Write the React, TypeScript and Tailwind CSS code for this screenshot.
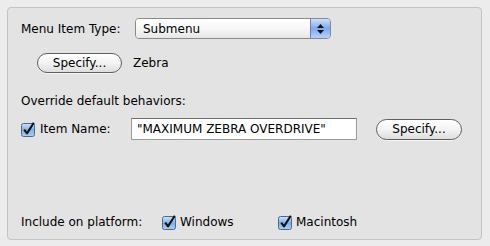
import React from "react";

const font = { fontFamily: '"DejaVu Sans", "Liberation Sans", sans-serif' };

function Check() {
  return (
    <svg width="15" height="15" viewBox="0 0 15 15" className="shrink-0">
      <defs>
        <linearGradient id="cb" x1="0" y1="0" x2="0" y2="1">
          <stop offset="0" stopColor="#cfe3f7" />
          <stop offset="0.5" stopColor="#7fb1e6" />
          <stop offset="1" stopColor="#a9d0f5" />
        </linearGradient>
      </defs>
      <rect x="0.5" y="1.5" width="13" height="13" rx="2" fill="url(#cb)" stroke="#4d6a8c" />
      <path d="M3.2 7.6 L6 11.4 L12.8 0.8" fill="none" stroke="#111" strokeWidth="2.1" strokeLinejoin="round" />
    </svg>
  );
}

function PillButton({ label, w, h }: { label: string; w: string; h: string }) {
  return (
    <div
      className={`${w} ${h} shrink-0 flex items-center justify-center rounded-full border border-[#5f5f5f] bg-gradient-to-b from-[#ffffff] via-[#f3f3f3] to-[#dedede] text-[12px] text-black shadow-[0_1px_0_rgba(255,255,255,0.6)]`}
    >
      {label}
    </div>
  );
}

export default function App() {
  return (
    <div className="w-[490px] h-[246px] bg-[#ececec] pt-[7px] pl-[7px] text-[12px] text-black" style={font}>
      <div className="w-[475px] h-[233px] rounded-[4px] border border-[#c3c3c3] bg-[#e3e3e3] flex flex-col pl-[13px]">
        <div className="mt-[10px] h-[21px] flex items-center">
          <span className="w-[114px]">Menu Item Type:</span>
          <div className="w-[196px] h-[21px] flex rounded-[4px] border border-[#8a8a8a] overflow-hidden">
            <div className="flex-1 flex items-center pl-[7px] bg-gradient-to-b from-[#ffffff] via-[#f7f7f7] to-[#e6e6e6]">Submenu</div>
            <div className="w-[20px] flex flex-col items-center justify-center gap-[2px] border-l border-[#6b7fb8] bg-gradient-to-b from-[#cde0fb] via-[#7ea9ec] to-[#b6d2fb]">
              <svg width="7" height="4" viewBox="0 0 7 4"><path d="M3.5 0 L7 4 L0 4 Z" fill="#111" /></svg>
              <svg width="7" height="4" viewBox="0 0 7 4"><path d="M0 0 L7 0 L3.5 4 Z" fill="#111" /></svg>
            </div>
          </div>
        </div>

        <div className="mt-[14px] h-[20px] flex items-center pl-[16px]">
          <PillButton label="Specify..." w="w-[85px]" h="h-[20px]" />
          <span className="ml-[11px]">Zebra</span>
        </div>

        <div className="mt-[21px] h-[14px] flex items-center">Override default behaviors:</div>

        <div className="mt-[10px] h-[22px] flex items-center">
          <Check />
          <span className="ml-[4px] w-[91px]">Item Name:</span>
          <div className="w-[226px] h-[22px] flex items-center pl-[5px] bg-white border border-[#9a9a9a] border-t-[#6e6e6e]">
            "MAXIMUM ZEBRA OVERDRIVE"
          </div>
          <div className="ml-[19px]">
            <PillButton label="Specify..." w="w-[86px]" h="h-[21px]" />
          </div>
        </div>

        <div className="mt-[74px] h-[16px] flex items-center">
          <span className="w-[141px]">Include on platform:</span>
          <Check />
          <span className="ml-[3px] w-[98px]">Windows</span>
          <Check />
          <span className="ml-[3px]">Macintosh</span>
        </div>
      </div>
    </div>
  );
}
